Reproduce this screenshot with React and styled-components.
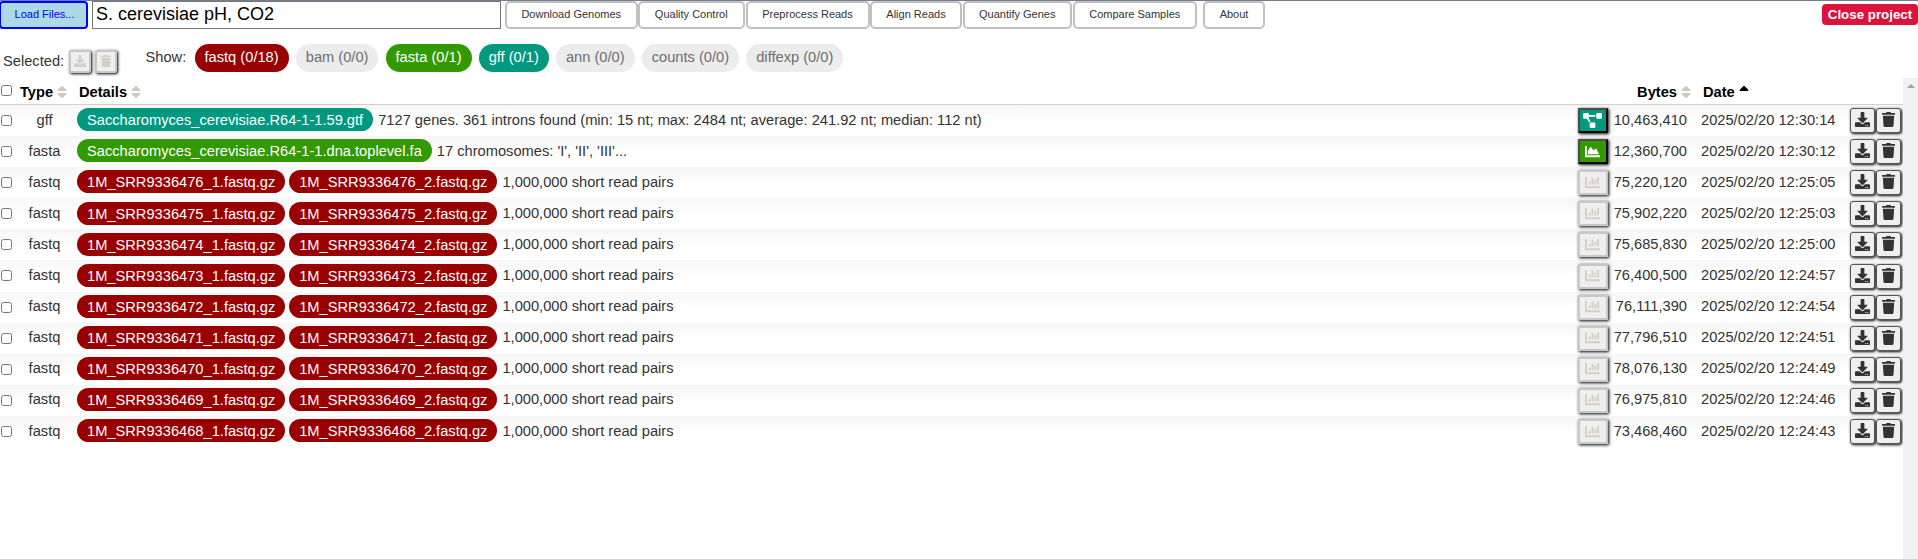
import React from "react";
import styled, { createGlobalStyle } from "styled-components";
import { FaDownload, FaTrash, FaProjectDiagram, FaChartArea, FaChartBar, FaSort, FaSortUp } from "react-icons/fa";

const colors = { fastq: "#990000", fasta: "#339900", gff: "#009980" };

const GlobalStyle = createGlobalStyle`
  * { box-sizing: border-box; }
  body { margin: 0; background: #fff; overflow: hidden; }
`;

const Page = styled.div`
  display: flex;
  flex-direction: column;
  height: 559px;
  color: #333;
  font: 14.67px/17px "Liberation Sans", Arial, sans-serif;
`;

const TopBar = styled.header`
  display: flex;
  height: 29px;
  border-top: 1px solid #708090;
  align-items: stretch;
`;

const LoadButton = styled.button`
  width: 89px;
  margin-left: -1px;
  padding: 0 0 2px 2px;
  border: 2px solid blue;
  border-radius: 4px;
  background: lightblue;
  color: blue;
  font: 11px "Liberation Sans", Arial, sans-serif;
`;

const ProjectName = styled.input`
  width: 409px;
  margin: 0 4px;
  padding: 0 3px 2px;
  border: 1px solid #767676;
  color: #000;
  font: 18px "Liberation Sans", Arial, sans-serif;
  outline: 0;
`;

const MenuButton = styled.button`
  width: ${(p) => p.$width}px;
  margin-right: ${(p) => p.$gap || 0}px;
  padding: 0 0 2px;
  border: 2px solid silver;
  border-radius: 5px;
  background: #fff;
  color: #333;
  white-space: nowrap;
  font: 11px "Liberation Sans", Arial, sans-serif;
`;

const CloseButton = styled.button`
  width: 96px;
  height: 21px;
  margin: 3px 0 0 auto;
  padding: 0;
  border: 0;
  border-radius: 4px;
  background: crimson;
  color: #fff;
  font: bold 13.33px "Liberation Sans", Arial, sans-serif;
`;

const FilterBar = styled.div`
  display: flex;
  height: 49px;
  padding: 15px 0 0 3px;
  align-items: flex-start;
`;

const SelectedGroup = styled.div`
  display: flex;
  gap: 4px;
  margin-top: 6px;
`;

const SelectedLabel = styled.span`
  width: 62px;
  padding-top: 3px;
`;

const BulkButton = styled.button`
  display: flex;
  width: 22px;
  height: 23px;
  padding: 0 1px 1px 0;
  align-items: center;
  justify-content: center;
  border: 2px solid #c8c8c8;
  border-radius: 2px;
  background: #efefef;
  box-shadow: 1px 1px 3px #000;
  color: #d6d0c4;
  font-size: 12px;
`;

const ShowLabel = styled.span`
  width: 49px;
  margin: 5px 0 0 28.5px;
`;

const Filters = styled.div`
  display: flex;
  gap: 7.1px;
`;

const FilterChip = styled.span`
  height: 28px;
  padding: 5px 10px 0;
  border-radius: 14px;
  background: ${(p) => colors[p.$kind] || "#ececec"};
  color: ${(p) => (colors[p.$kind] ? "#fff" : "#6f6f6f")};
  white-space: nowrap;
`;

const Content = styled.main`
  display: flex;
  flex: 1;
  min-height: 0;
`;

const Table = styled.div`
  flex: 1;
`;

const line = `
  display: grid;
  grid-template-columns: 15px 59px 1fr 30px 79px 14px 149px 53px;
`;

const HeadRow = styled.div`
  ${line}
  height: 27px;
  border-bottom: 1px solid #d6d0c4;
  color: #000;
  font-weight: bold;
`;

const HeadCell = styled.span`
  display: flex;
  margin-right: ${(p) => (p.$end ? -4 : 0)}px;
  padding: 6px 0 0 ${(p) => p.$indent || 0}px;
  gap: 4px;
  justify-content: ${(p) => (p.$end ? "flex-end" : "flex-start")};
  svg { flex: none; width: 10px; height: 16px; color: #d0cabe; }
  svg.active { color: #000; }
`;

const Row = styled.div`
  ${line}
  height: 31.1px;
  background: linear-gradient(#f6f6f6, #fff 55%);
`;

const Check = styled.input.attrs({ type: "checkbox" })`
  width: 11px;
  height: 11px;
  margin: ${(p) => p.$top}px 0 0 1px;
`;

const TypeCell = styled.span`
  padding-top: 6.6px;
  text-align: center;
`;

const Details = styled.div`
  display: flex;
  padding: 3.3px 0 0 3px;
  gap: 4px;
  white-space: nowrap;
`;

const FileChip = styled.span`
  height: 23px;
  padding: 4px 10px 0;
  border-radius: 12px;
  background: ${(p) => colors[p.$kind]};
  color: #fff;
`;

const Note = styled.span`
  padding: 3.3px 0 0 1px;
`;

const ViewButton = styled.button`
  display: flex;
  width: 30px;
  height: 25px;
  margin-top: 3.1px;
  padding: 0 1px 1px 0;
  align-items: center;
  justify-content: center;
  border: 2px solid;
  border-color: ${(p) => (p.$kind === "fastq" ? "#c8c8c8" : "#4c4c4c #000 #000 #4c4c4c")};
  background: ${(p) => (p.$kind === "fastq" ? "#efefef" : colors[p.$kind])};
  box-shadow: 1px 1px 3px #000;
  color: ${(p) => (p.$kind === "fastq" ? "#d6d0c4" : "#fff")};
  svg { width: 19px; height: 15px; }
`;

const Value = styled.span`
  padding-top: 6.6px;
  text-align: right;
`;

const DateValue = styled.span`
  grid-column: 7;
  padding-top: 6.6px;
`;

const Actions = styled.div`
  display: flex;
  padding-top: 3.1px;
  gap: 1px;
`;

const ActionButton = styled.button`
  display: flex;
  width: 25px;
  height: 25px;
  padding: 0 1px 2px 0;
  align-items: center;
  justify-content: center;
  border: 1px solid #555;
  border-radius: 3px;
  background: #efefef;
  box-shadow: 1px 1px 3px #000;
  color: #333;
  font-size: 15px;
`;

const Scrollbar = styled.div`
  display: flex;
  width: 15px;
  padding-top: 6px;
  justify-content: center;
  background: #f1f1f1;
`;

const ScrollArrow = styled.span`
  width: 0;
  height: 4px;
  border: solid transparent;
  border-width: 0 4px 4px;
  border-bottom-color: #a3a3a3;
`;

const menu = [
  ["Download Genomes", 132.5, 0.5],
  ["Quality Control", 106.5, 1],
  ["Preprocess Reads", 124, 0.5],
  ["Align Reads", 92, 0.5],
  ["Quantify Genes", 109.5, 0.5],
  ["Compare Samples", 124.5, 6],
  ["About", 62, 0],
];

const filters = [
  ["fastq", "0/18"],
  ["bam", "0/0"],
  ["fasta", "0/1"],
  ["gff", "0/1"],
  ["ann", "0/0"],
  ["counts", "0/0"],
  ["diffexp", "0/0"],
];
const active = ["fastq", "fasta", "gff"];

const reads = [
  ["76", "75,220,120", "25:05"],
  ["75", "75,902,220", "25:03"],
  ["74", "75,685,830", "25:00"],
  ["73", "76,400,500", "24:57"],
  ["72", "76,111,390", "24:54"],
  ["71", "77,796,510", "24:51"],
  ["70", "78,076,130", "24:49"],
  ["69", "76,975,810", "24:46"],
  ["68", "73,468,460", "24:43"],
];

const rows = [
  {
    kind: "gff",
    files: ["Saccharomyces_cerevisiae.R64-1-1.59.gtf"],
    note: "7127 genes. 361 introns found (min: 15 nt; max: 2484 nt; average: 241.92 nt; median: 112 nt)",
    bytes: "10,463,410",
    time: "30:14",
  },
  {
    kind: "fasta",
    files: ["Saccharomyces_cerevisiae.R64-1-1.dna.toplevel.fa"],
    note: "17 chromosomes: 'I', 'II', 'III'...",
    bytes: "12,360,700",
    time: "30:12",
  },
  ...reads.map(([id, bytes, time]) => ({
    kind: "fastq",
    files: [1, 2].map((n) => `1M_SRR93364${id}_${n}.fastq.gz`),
    note: "1,000,000 short read pairs",
    bytes,
    time,
  })),
];

const viewIcons = { gff: FaProjectDiagram, fasta: FaChartArea, fastq: FaChartBar };

function FileRow({ kind, files, note, bytes, time }) {
  const Icon = viewIcons[kind];
  return (
    <Row>
      <Check $top={10} />
      <TypeCell>{kind}</TypeCell>
      <Details>
        {files.map((f) => (
          <FileChip key={f} $kind={kind}>{f}</FileChip>
        ))}
        <Note>{note}</Note>
      </Details>
      <ViewButton $kind={kind}><Icon /></ViewButton>
      <Value>{bytes}</Value>
      <DateValue>{`2025/02/20 12:${time}`}</DateValue>
      <Actions>
        <ActionButton><FaDownload /></ActionButton>
        <ActionButton><FaTrash /></ActionButton>
      </Actions>
    </Row>
  );
}

export default function App() {
  return (
    <Page>
      <GlobalStyle />
      <TopBar>
        <LoadButton>Load Files...</LoadButton>
        <ProjectName defaultValue="S. cerevisiae pH, CO2" />
        {menu.map(([label, width, gap]) => (
          <MenuButton key={label} $width={width} $gap={gap}>{label}</MenuButton>
        ))}
        <CloseButton>Close project</CloseButton>
      </TopBar>
      <FilterBar>
        <SelectedGroup>
          <SelectedLabel>Selected:</SelectedLabel>
          <BulkButton><FaDownload /></BulkButton>
          <BulkButton><FaTrash /></BulkButton>
        </SelectedGroup>
        <ShowLabel>Show:</ShowLabel>
        <Filters>
          {filters.map(([kind, count]) => (
            <FilterChip key={kind} $kind={active.includes(kind) ? kind : ""}>{`${kind} (${count})`}</FilterChip>
          ))}
        </Filters>
      </FilterBar>
      <Content>
        <Table>
          <HeadRow>
            <Check $top={7} />
            <HeadCell $indent={5}>Type <FaSort /></HeadCell>
            <HeadCell $indent={5}>Details <FaSort /></HeadCell>
            <span />
            <HeadCell $end>Bytes <FaSort /></HeadCell>
            <span />
            <HeadCell $indent={2}>Date <FaSortUp className="active" /></HeadCell>
          </HeadRow>
          {rows.map((r) => (
            <FileRow key={r.files[0]} {...r} />
          ))}
        </Table>
        <Scrollbar><ScrollArrow /></Scrollbar>
      </Content>
    </Page>
  );
}
